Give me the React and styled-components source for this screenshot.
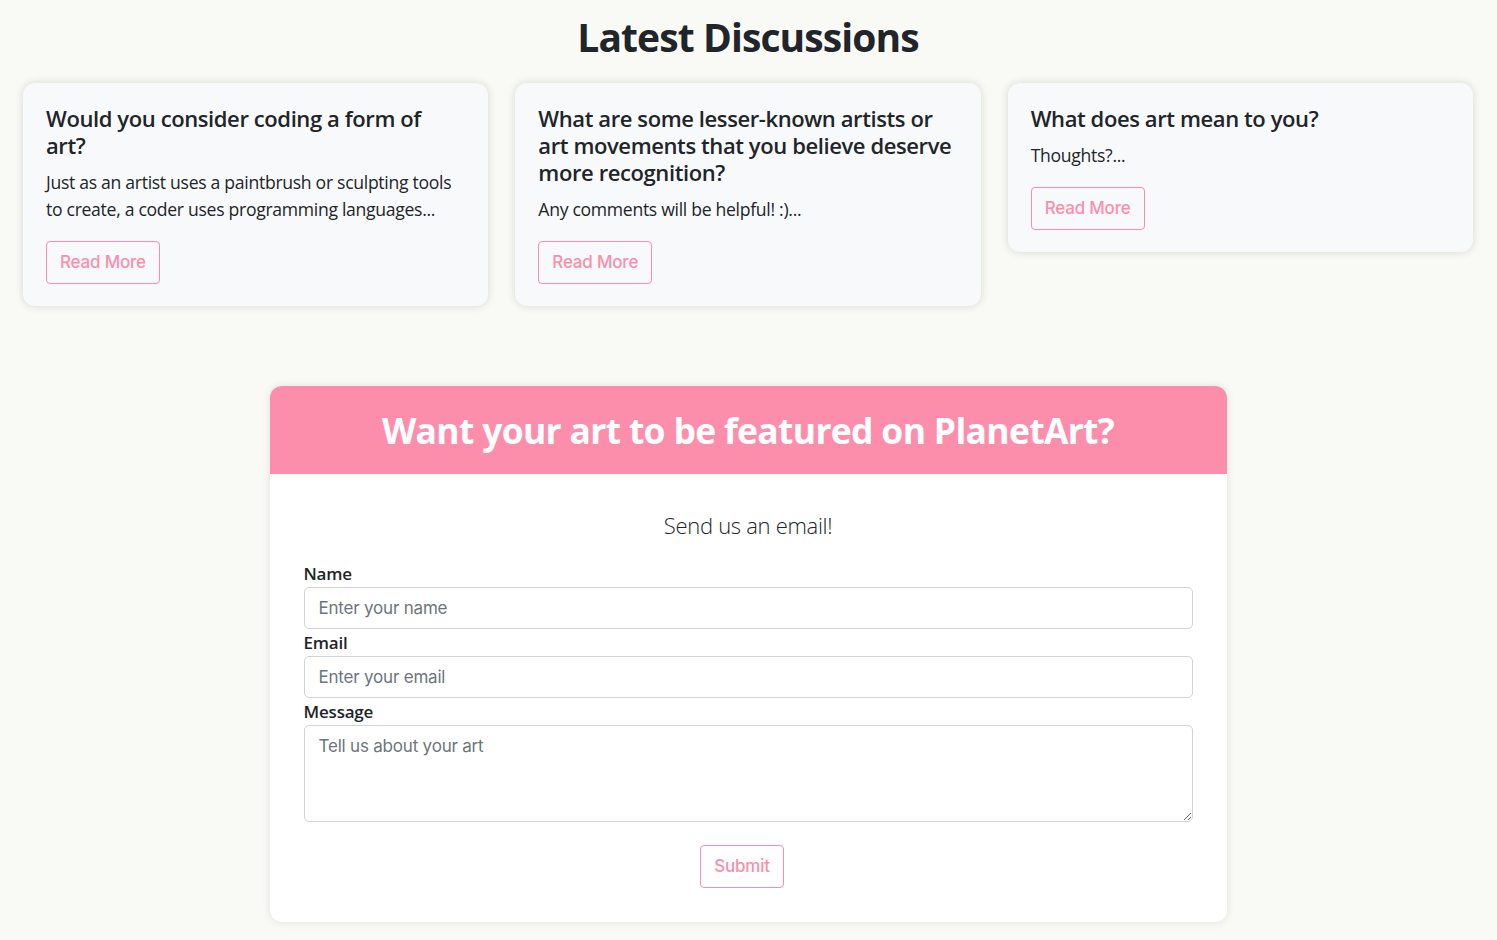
import React from 'react';
import styled, { createGlobalStyle } from 'styled-components';

const pink = '#fc8eac';

const GlobalStyle = createGlobalStyle`
  * { box-sizing: border-box; }
  body {
    margin: 0;
    background: #f9f9f6;
    color: #212529;
    font-family: "Open Sans", "Noto Sans", sans-serif;
  }
`;

const Page = styled.main`
  display: flex;
  flex-direction: column;
  align-items: center;
  padding: 14px 24px 19px 23px;
`;

const PageTitle = styled.h1`
  margin: 0 0 22px;
  font-size: 39px;
  font-weight: 700;
  line-height: 1.2;
  letter-spacing: -0.9px;
`;

const CardRow = styled.section`
  display: grid;
  grid-template-columns: repeat(3, 1fr);
  gap: 27px;
  width: 100%;
  align-items: start;
`;

const Card = styled.article`
  background: #f8f9fa;
  border-radius: 12px;
  box-shadow: 0 0 8px rgba(0, 0, 0, 0.14);
  padding: 22px 23px 22px;
`;

const CardTitle = styled.h4`
  margin: 0 0 10px;
  font-size: 22px;
  font-weight: 600;
  line-height: 27px;
  letter-spacing: -0.4px;
`;

const CardText = styled.p`
  margin: 0 0 18px;
  font-size: 17.6px;
  line-height: 27px;
  letter-spacing: -0.3px;
`;

const OutlineButton = styled.button`
  font-family: "Inter", "Lato", sans-serif;
  font-size: 17px;
  font-weight: 500;
  color: ${pink};
  background: transparent;
  border: 1px solid ${pink};
  border-radius: 4px;
  height: 43px;
  padding: 0 13px;
  cursor: pointer;
  letter-spacing: -0.2px;
`;

const FormCard = styled.section`
  width: 957px;
  margin-top: 80px;
  background: #fff;
  border-radius: 12px;
  overflow: hidden;
  box-shadow: 0 0 8px rgba(0, 0, 0, 0.1);
`;

const FormHeader = styled.header`
  background: ${pink};
  height: 88px;
  display: flex;
  align-items: center;
  justify-content: center;
`;

const FormHeaderTitle = styled.h2`
  margin: 0;
  color: #fff;
  font-size: 35.5px;
  font-weight: 700;
  letter-spacing: -0.7px;
`;

const FormBody = styled.form`
  padding: 36px 34px 34px;
  display: flex;
  flex-direction: column;
`;

const Subtitle = styled.p`
  margin: 0 0 20px;
  text-align: center;
  font-size: 22px;
  font-weight: 300;
  line-height: 30px;
  letter-spacing: -0.3px;
`;

const Label = styled.label`
  font-size: 17px;
  font-weight: 600;
  line-height: 27px;
  letter-spacing: -0.2px;
`;

const fieldStyles = `
  width: 100%;
  border: 1px solid #ced4da;
  border-radius: 5px;
  padding: 6px 14px;
  font-family: "Inter", "Lato", sans-serif;
  font-size: 17px;
  line-height: 28px;
  color: #212529;
  background: #fff;
  letter-spacing: -0.2px;
  &::placeholder { color: #6c757d; }
`;

const Input = styled.input`
  ${fieldStyles}
  height: 42px;
`;

const TextArea = styled.textarea`
  ${fieldStyles}
  height: 97px;
  display: block;
  resize: vertical;
`;

const Field = styled.div`
  display: flex;
  flex-direction: column;
`;

const SubmitRow = styled.div`
  display: flex;
  justify-content: center;
  margin-top: 23px;
  padding-right: 12px;
`;

const discussions = [
  {
    id: 1,
    title: 'Would you consider coding a form of art?',
    text: 'Just as an artist uses a paintbrush or sculpting tools to create, a coder uses programming languages...',
  },
  {
    id: 2,
    title: 'What are some lesser-known artists or art movements that you believe deserve more recognition?',
    text: 'Any comments will be helpful! :)...',
  },
  {
    id: 3,
    title: 'What does art mean to you?',
    text: 'Thoughts?...',
  },
];

export default function App() {
  return (
    <>
      <GlobalStyle />
      <Page>
        <PageTitle>Latest Discussions</PageTitle>
        <CardRow>
          {discussions.map(d => (
            <Card key={d.id}>
              <CardTitle>{d.title}</CardTitle>
              <CardText>{d.text}</CardText>
              <OutlineButton>Read More</OutlineButton>
            </Card>
          ))}
        </CardRow>

        <FormCard>
          <FormHeader>
            <FormHeaderTitle>Want your art to be featured on PlanetArt?</FormHeaderTitle>
          </FormHeader>
          <FormBody onSubmit={e => e.preventDefault()}>
            <Subtitle>Send us an email!</Subtitle>
            <Field>
              <Label htmlFor="name">Name</Label>
              <Input id="name" placeholder="Enter your name" />
            </Field>
            <Field>
              <Label htmlFor="email">Email</Label>
              <Input id="email" type="email" placeholder="Enter your email" />
            </Field>
            <Field>
              <Label htmlFor="message">Message</Label>
              <TextArea id="message" placeholder="Tell us about your art" />
            </Field>
            <SubmitRow>
              <OutlineButton type="submit">Submit</OutlineButton>
            </SubmitRow>
          </FormBody>
        </FormCard>
      </Page>
    </>
  );
}
